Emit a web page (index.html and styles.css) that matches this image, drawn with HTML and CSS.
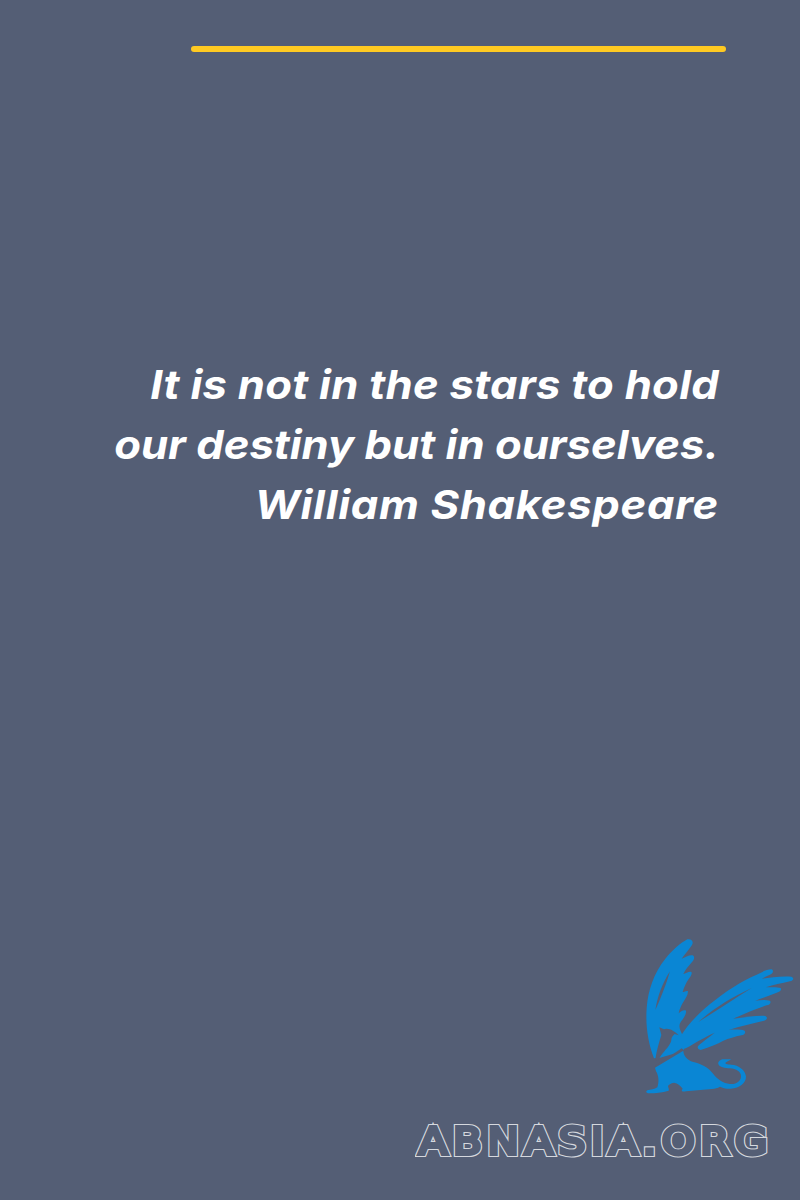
FILE: index.html
```html
<!DOCTYPE html>
<html lang="en">
<head>
    <meta charset="UTF-8">
    <meta name="viewport" content="width=device-width, initial-scale=1.0">
    <title>Quote</title>
    <link rel="stylesheet" href="styles.css">
</head>
<body>
    <div class="top-bar"></div>

    <blockquote class="quote">
        <div class="line-first">It is not in the stars to hold</div>
        <div>our destiny but in ourselves.</div>
        <div class="line-author">William Shakespeare</div>
    </blockquote>

    <div class="brand">
        <svg class="griffin" viewBox="0 0 510 510" aria-hidden="true">
            <!-- left wing -->
            <path d="M72 385C55 340 46 290 50 235C54 180 72 130 105 88C125 62 150 40 172 28C184 25 192 34 186 45C176 60 165 72 155 86C165 82 178 74 188 76C196 80 192 90 186 96C176 108 166 118 160 132C168 130 178 122 184 126C188 132 180 142 174 150C168 160 162 172 158 186C164 186 170 180 174 184C174 196 166 206 160 216C154 226 148 238 146 250C152 246 160 238 168 242C170 252 160 266 152 276C144 288 150 300 160 320L162 362L88 384Z"/>
            <path class="cut" d="M76 240C82 200 97 160 120 124C108 165 92 205 76 240Z"/>
            <!-- right wing -->
            <path d="M150 322C170 288 200 255 240 222C285 186 335 152 380 134C395 126 412 118 424 118C432 120 430 130 420 134C410 138 402 142 396 146C420 142 455 138 484 140C494 144 490 152 480 154C455 160 430 164 408 172C422 172 440 170 452 174C456 180 450 186 440 188C420 196 398 204 376 212C390 210 408 208 420 212C424 218 420 224 410 226C380 236 345 250 310 266C340 262 380 256 406 258C414 262 412 270 402 272C370 280 330 288 296 300C310 298 332 298 344 302C348 308 344 314 334 316C315 320 296 326 280 332C262 342 240 350 212 360C202 358 200 350 208 344C220 334 236 322 254 308C232 318 210 330 190 342C175 352 162 358 150 360Z"/>
            <path class="cut" d="M205 276C245 240 300 204 365 174C310 208 255 245 205 276Z"/>
            <!-- head and neck are cut out of the wing -->
            <path class="cut" d="M76 388C80 360 88 335 94 315L88 292L102 298L108 296C120 295 136 304 146 316L134 312C128 318 124 322 124 330C122 345 105 360 92 378L84 392Z"/>
            <path class="cut" d="M72 410L155 355L164 362L80 418Z"/>
            <!-- body and tail -->
            <path d="M75 413L160 362C160 375 170 390 190 396C215 402 235 412 250 432C262 448 280 460 300 462C320 464 332 452 333 440C334 425 318 416 300 415C285 414 268 412 265 402C263 396 270 390 278 388L304 388L288 397C282 402 292 404 304 404C326 405 346 420 348 440C348 458 330 474 302 476C290 477 278 474 270 470C262 474 256 476 246 477L168 484C156 486 152 482 158 476C152 468 144 460 132 458C122 460 116 464 114 468C115 474 118 478 116 482C96 488 76 490 58 490C48 490 46 484 52 481C62 478 74 478 82 472C88 456 86 436 78 424Z"/>
        </svg>
        <div class="site-name" data-text="ABNASIA.ORG">ABNASIA.ORG</div>
    </div>
</body>
</html>
```

FILE: styles.css
```css
html, body {
    margin: 0;
    padding: 0;
}

body {
    width: 800px;
    height: 1200px;
    background: #545e75;
    display: flex;
    flex-direction: column;
    overflow: hidden;
}

.top-bar {
    width: 535px;
    height: 6px;
    margin: 46px 74px 0 191px;
    background: #ffca22;
    border-radius: 3px;
}

.quote {
    margin: 303px 81px 0 0;
    color: #fff;
    font-family: Inter, "Open Sans", sans-serif;
    font-size: 40px;
    font-weight: 700;
    font-style: italic;
    line-height: 60px;
    text-align: right;
    white-space: nowrap;
    transform: scaleX(1.09);
    transform-origin: right center;
}

.line-first {
    letter-spacing: 0.25px;
}

.line-author {
    letter-spacing: 0.65px;
}

.brand {
    margin-top: auto;
    display: flex;
    flex-direction: column;
    align-items: flex-end;
}

.griffin {
    width: 170px;
    height: 170px;
    display: block;
    fill: #0a86d4;
}

.griffin .cut {
    fill: #545e75;
}

/* fat outlined lettering: wide light stroke with a narrower background stroke on top */
.site-name {
    position: relative;
    margin: 19px 27px 37px 0;
    color: #d5d8de;
    -webkit-text-stroke: 6px #d5d8de;
    font-family: "DejaVu Sans", sans-serif;
    font-size: 38px;
    font-weight: 400;
    line-height: 44px;
    letter-spacing: 5.2px;
    white-space: nowrap;
    transform: scaleX(1.1);
    transform-origin: right center;
}

.site-name::after {
    content: attr(data-text);
    position: absolute;
    left: 0;
    top: 0;
    color: #545e75;
    -webkit-text-stroke: 3.8px #545e75;
}
```
